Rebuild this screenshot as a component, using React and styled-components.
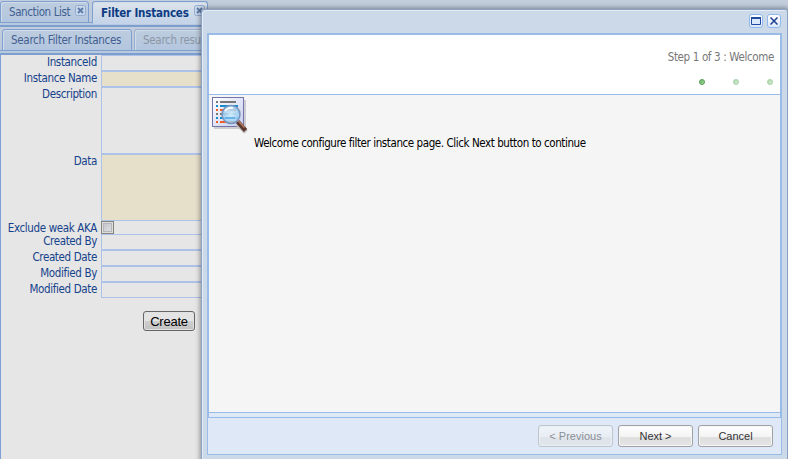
import React from "react";
import styled, { createGlobalStyle } from "styled-components";

const Global = createGlobalStyle`
  * { box-sizing: border-box; }
  body { margin: 0; background: #e6e6e6; overflow: hidden; }
  button { font: inherit; margin: 0; padding: 0; }
`;

const Screen = styled.div`
  position: relative;
  width: 788px;
  height: 459px;
  overflow: hidden;
  background: #e6e6e6;
  color: #15428b;
  font: 11.5px "DejaVu Sans Condensed", "DejaVu Sans", sans-serif;
  font-stretch: condensed;
`;

const Text = styled.span`
  white-space: nowrap;
  letter-spacing: ${(p) => p.$spacing || 0}px;
`;

const TabStrip = styled.div`
  display: flex;
  align-items: flex-start;
  height: ${(p) => p.$height}px;
  padding: ${(p) => p.$pad};
  gap: ${(p) => p.$gap}px;
  background: linear-gradient(#c3cddb, #b8c8de);
  box-shadow: inset 0 -2px #7f9ed0, inset 0 -4px #b8cade, inset 0 -5px #7f9ed0;
`;

const Tab = styled.div`
  position: relative;
  flex: none;
  display: flex;
  align-items: center;
  width: ${(p) => p.$width}px;
  height: ${(p) => (p.$active ? 23 : 22)}px;
  padding: 0 0 0 8px;
  border: 1px solid ${(p) => (p.$muted ? "#9aafcd" : "#7f9fd1")};
  border-bottom-color: ${(p) => (p.$active ? "#c5d4e8" : "#7f9fd1")};
  border-radius: 3px 3px 0 0;
  background: ${(p) => p.$active ? "linear-gradient(#dce3eb, #c4d3e8)" : "linear-gradient(#becddf, #b3c6df)"};
  box-shadow: inset 1px 1px #d0dce9;
  color: ${(p) => (p.$muted ? "#8c96a5" : p.$active ? "#0d3b83" : "#416090")};
  font-weight: ${(p) => (p.$active ? 700 : 400)};
`;

const TabClose = styled.svg`
  position: absolute;
  top: 3px;
  right: 2px;
  width: 11px;
  height: 11px;
`;

const Form = styled.div`
  display: flex;
  flex-direction: column;
  border-left: 1px solid #7fa0d6;
  height: 404px;
`;

const Row = styled.div`
  display: flex;
  flex: none;
  height: ${(p) => p.$height}px;
`;

const Label = styled.div`
  width: 100px;
  flex: none;
  padding-right: 4px;
  text-align: right;
  line-height: 15px;
  white-space: nowrap;
`;

const Field = styled.div`
  flex: 1;
  border: 1px solid #adc2e8;
  border-width: ${(p) => (p.$check ? "0 0 0 1px" : "1px")};
  background: ${(p) => (p.$required ? "#e6dfca" : "#e6e6e6")};
`;

const Check = styled.div`
  width: 13px;
  height: 13px;
  margin-left: -1px;
  border: 1px solid #85857e;
  background: linear-gradient(135deg, #bfc0c5, #e4e4e4);
  box-shadow: inset 0 0 0 1px #dedede, inset 0 0 0 2px #b5b5bb;
`;

const CreateButton = styled.button`
  width: 52px;
  height: 20px;
  margin: 13px 0 0 142px;
  border: 1px solid #666;
  border-radius: 3px;
  background: linear-gradient(#e4e4e4 0 48%, #cfcfcf 50%, #c1c1c1);
  box-shadow: inset 0 0 0 1px #e2e2e2;
  color: #000;
  font: 13px/17px "Liberation Sans", sans-serif;
  letter-spacing: -0.25px;
`;

const Dialog = styled.div`
  position: absolute;
  left: 201px;
  top: 9px;
  width: 587px;
  height: 460px;
  padding: 0 5px;
  border: 1px solid #8aa3c5;
  border-radius: 4px 3px 0 0;
  background: #ccd9e8;
  box-shadow: 0 0 5px 1px rgba(0, 0, 0, 0.38), inset 1px 1px #e4edf7;
`;

const DialogTools = styled.div`
  display: flex;
  justify-content: flex-end;
  gap: 4px;
  height: 23px;
  padding: 4px 1px 0 0;
`;

const Tool = styled.button`
  width: 14px;
  height: 14px;
  border: 1px solid #91b9ed;
  border-radius: 3px;
  background: linear-gradient(#fff, #dbe8fa);
  display: grid;
  place-items: center;
`;

const Wizard = styled.div`
  display: flex;
  flex-direction: column;
  width: 575px;
  height: 422px;
  border: 1px solid #99bbe8;
  background: #dfe8f6;
`;

const Cards = styled.div`
  height: 384px;
  display: flex;
  flex-direction: column;
  border: 1px solid #99bbe8;
`;

const WizardHeader = styled.header`
  height: 60px;
  border-bottom: 1px solid #99bbe8;
  background: #fff;
  display: flex;
  flex-direction: column;
  align-items: flex-end;
  padding: 16px 6px 0 0;
  color: #777;
  line-height: 13px;
`;

const Steps = styled.div`
  display: flex;
  gap: 28px;
  margin: 15px 1px 0 0;
`;

const Dot = styled.i`
  width: 6px;
  height: 6px;
  border-radius: 50%;
  border: 1px solid #4f9c4e;
  background: linear-gradient(135deg, #68b466, #a4dc9e);
  opacity: ${(p) => (p.$active ? 1 : 0.5)};
`;

const Content = styled.main`
  display: flex;
  align-items: flex-start;
  height: 318px;
  border-bottom: 1px solid #99bbe8;
  background: #f5f5f5;
  color: #000;
`;

const Message = styled.div`
  padding: 41px 0 0 5px;
  line-height: 15px;
`;

const Footer = styled.footer`
  display: flex;
  justify-content: flex-end;
  gap: 5px;
  padding: 7px 8px 0 0;
`;

const FooterButton = styled.button`
  width: 75px;
  height: 22px;
  border: 1px solid #a0a2a5;
  border-radius: 3px;
  background: linear-gradient(#fff, #f3f3f3 55%, #dedede 58%, #e5e5e5);
  box-shadow: inset 0 0 0 1px #f6f6f6;
  color: #333;
  font: 11px/18px "Liberation Sans", sans-serif;
  opacity: ${(p) => (p.disabled ? 0.5 : 1)};
`;

function CloseMark() {
  return (
    <TabClose viewBox="0 0 11 11">
      <rect x=".5" y=".5" width="10" height="10" rx="2" fill="#c9d9ec" stroke="#91acd0" />
      <path d="M3 3l5 5M8 3l-5 5" stroke="#607ca9" strokeWidth="2" />
    </TabClose>
  );
}

function PreviewIcon() {
  return (
    <svg width="40" height="40" viewBox="0 0 40 40">
      <defs>
        <linearGradient id="page" x2="1" y2="1">
          <stop stopColor="#fff" />
          <stop offset="1" stopColor="#c5cced" />
        </linearGradient>
        <radialGradient id="lens">
          <stop stopColor="#d4f1ff" stopOpacity=".93" />
          <stop offset="1" stopColor="#92c9f0" stopOpacity=".82" />
        </radialGradient>
      </defs>
      <path d="M5 33h31V5" fill="none" stroke="#cdcdd2" strokeWidth="2" />
      <rect x="3.5" y="2.5" width="31" height="29" fill="url(#page)" stroke="#7474ad" />
      <path d="M7 7h2M11 7h16M7 19h2M11 19h16" stroke="#777" strokeWidth="2" />
      <path d="M7 11h2M11 11h18M7 23h2M11 23h18" stroke="#168bd0" strokeWidth="2" />
      <path d="M7 15h2M11 15h16M7 27h2M11 27h14" stroke="#f35c28" strokeWidth="2" />
      <path d="M29 29l8 8" stroke="#c4bfbd" strokeWidth="5" />
      <path d="M28.5 26.5l8 9" stroke="#5b3930" strokeWidth="4.5" />
      <path d="M29.5 26l6 6.5" stroke="#b1765c" strokeWidth="1.8" />
      <circle cx="22" cy="19.5" r="9" fill="url(#lens)" stroke="#7896bd" strokeWidth="1.5" />
      <path d="M16 23h10" stroke="#68b4e8" strokeWidth="2" />
      <path d="M16 16q3-4 8-3" fill="none" stroke="#f4fcff" strokeWidth="2" />
    </svg>
  );
}

const rows = [
  ["InstanceId", 16, false],
  ["Instance Name", 16, true],
  ["Description", 67, false],
  ["Data", 67, true],
  ["Exclude weak AKA", 13, false],
  ["Created By", 16, false],
  ["Created Date", 16, false],
  ["Modified By", 16, false],
  ["Modified Date", 16, false],
];

export default function App() {
  return (
    <>
      <Global />
      <Screen>
        <TabStrip $height={27} $pad="1px 0 0" $gap={3}>
          <Tab $width={89}><Text $spacing={-0.4}>Sanction List</Text><CloseMark /></Tab>
          <Tab $width={116} $active><Text $spacing={-0.2}>Filter Instances</Text><CloseMark /></Tab>
        </TabStrip>
        <TabStrip $height={28} $pad="2px 0 0 2px" $gap={2}>
          <Tab $width={130}><Text $spacing={-0.3}>Search Filter Instances</Text></Tab>
          <Tab $width={90} $muted><Text $spacing={-0.3}>Search results</Text></Tab>
        </TabStrip>
        <Form>
          {rows.map(([name, height, required]) => (
            <Row key={name} $height={height}>
              <Label><Text $spacing={-0.36}>{name}</Text></Label>
              <Field $required={required} $check={name === "Exclude weak AKA"}>
                {name === "Exclude weak AKA" && <Check />}
              </Field>
            </Row>
          ))}
          <CreateButton>Create</CreateButton>
        </Form>

        <Dialog>
          <DialogTools>
            <Tool aria-label="Maximize">
              <svg width="10" height="8"><path d="M.5 1.5h9v6h-9z" fill="#dce9fa" stroke="#2449a0" /><path d="M0 1h10" stroke="#2449a0" strokeWidth="2" /></svg>
            </Tool>
            <Tool aria-label="Close">
              <svg width="8" height="8"><path d="M.5.5l7 7M7.5.5l-7 7" stroke="#1e3f91" strokeWidth="1.5" /></svg>
            </Tool>
          </DialogTools>
          <Wizard>
            <Cards>
              <WizardHeader>
                <Text $spacing={-0.36}>Step 1 of 3 : Welcome</Text>
                <Steps><Dot $active /><Dot /><Dot /></Steps>
              </WizardHeader>
              <Content>
                <PreviewIcon />
                <Message><Text $spacing={-0.42}>Welcome configure filter instance page. Click Next button to continue</Text></Message>
              </Content>
            </Cards>
            <Footer>
              <FooterButton disabled>&lt; Previous</FooterButton>
              <FooterButton>Next &gt;</FooterButton>
              <FooterButton>Cancel</FooterButton>
            </Footer>
          </Wizard>
        </Dialog>
      </Screen>
    </>
  );
}
